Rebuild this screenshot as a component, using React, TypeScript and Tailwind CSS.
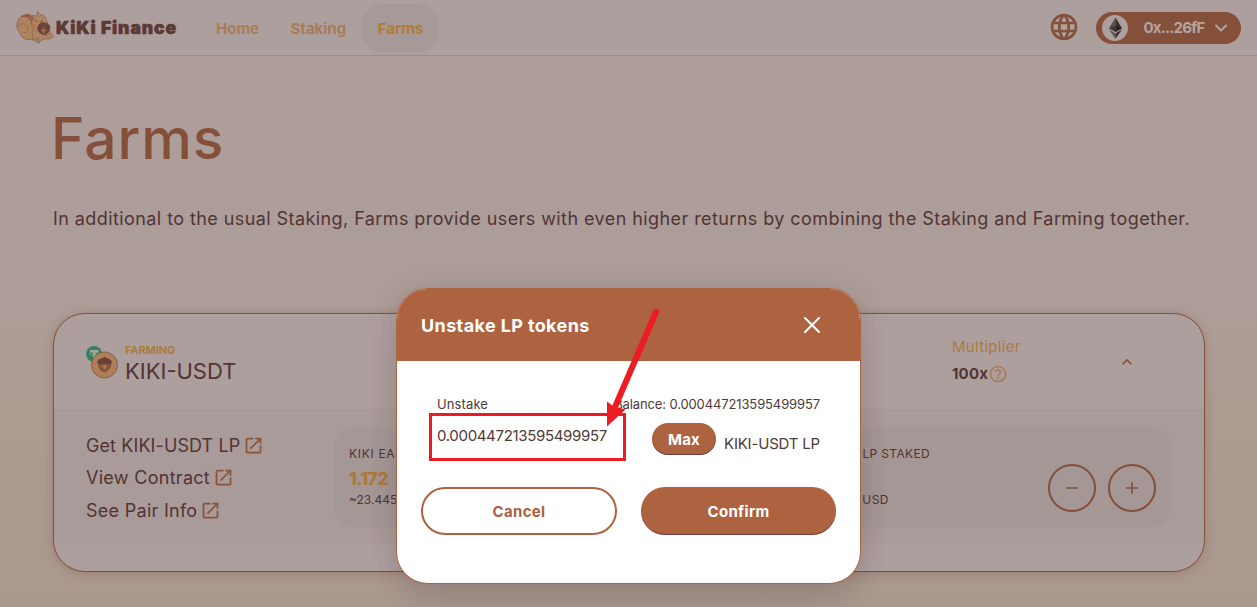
import type { ReactNode } from "react";
import { MdAdd, MdHelpOutline, MdKeyboardArrowUp, MdLanguage, MdOpenInNew, MdRemove } from "react-icons/md";

function Squirrel() {
  return (
    <svg width="40" height="36" viewBox="0 0 40 36" fill="none" stroke="#84604d" strokeWidth="0.7" strokeLinejoin="round" strokeLinecap="round">
      <path d="M17 29C10 31 5 28 4 23C-1 19 0 9 6 6C11 2 18 5 19 11L22 20Z" fill="#ae835f" />
      <path d="M6 6.500C11 4.500 16 9 16.500 15M10 5C15 5 18 9 18.500 13" stroke="#8f5b42" strokeWidth="1.500" />
      <path d="M2 17C4 12 12 13 12 19C12 22 9 24 7 22" />
      <path d="M17 9L16.500 5L19.500 6L21 5.500L21.500 1.500L24.500 4.500C28 5 30.500 8 31 12L34 16L34 22L37.500 27L33 29L27 29L23 33L17 30C15 25 17 21 18 19C15 17 15 12 17 9Z" fill="#ad8560" />
      <circle cx="17.500" cy="15.500" r="2" fill="#b57556" stroke="none" />
      <path d="M19 10.500l2 .7M24.500 11.500l2-.7" stroke="#654139" />
      <path d="M22 18C22 14 26 12 28 13C32 13 34.500 16 33 19C33 23 30 24.500 27.500 24.500C24 24 22.500 22 22 18Z" fill="#6f4339" stroke="#5b3732" />
      <path d="M27.500 17l1 2.500 2.500.5-2 1.500-1.500 2.500-1-2.500-2-1.500 2-.5z" fill="#a17138" stroke="none" />
      <path d="M20 20l3 2M33 24l-4 2M17 30l5-2 1 5" />
    </svg>
  );
}

function TokenPair() {
  return (
    <svg width="34" height="34" viewBox="0 0 34 34">
      <circle cx="8" cy="8" r="8" fill="#397e64" />
      <path d="M4 4h8.500v2.400H9.600V13H7V6.400H4z" fill="#a5aaa0" />
      <ellipse cx="8.200" cy="8" rx="5" ry="1.300" fill="none" stroke="#8ba394" strokeWidth="0.6" />
      <circle cx="18.500" cy="19" r="13" fill="#ac7f59" stroke="#7f5c46" strokeWidth="0.9" />
      <path d="M12 17.500C11 14 14.500 12.500 17.500 12L18 11H19.500L20 12C23 12.500 26.500 14 25 17.500C26 22.500 21.500 25.500 18.500 26.500C15.500 25.500 11.500 22.500 12 17.500Z" fill="#85543f" />
      <path d="M11.500 17.500C10.500 14 14.500 12.500 17.500 12L18 11H19.500L20 12C23 12.500 26.500 14 25.500 17.500C23.500 19.500 21.500 17 18.500 18C15.500 17 13.500 19.500 11.500 17.500Z" fill="#684038" />
      <path d="M18.500 18l1.200 1.600 1.800.7-1.500 1.200-1.500 2-1.500-2-1.500-1.200 1.800-.7z" fill="#ab7941" />
    </svg>
  );
}

function Ethereum() {
  return (
    <svg width="26" height="26" viewBox="0 0 26 26">
      <circle cx="13" cy="13" r="13" fill="#ad9f9d" />
      <path d="M13.500 2.500L7 13.200L13.500 17Z" fill="#5c504f" />
      <path d="M13.500 2.500L20 13.200L13.500 17Z" fill="#382e2e" />
      <path d="M7 13.200L13.500 10.300V17Z" fill="#453a3a" />
      <path d="M20 13.200L13.500 10.300V17Z" fill="#2b2424" />
      <path d="M7 14.600L13.500 18.400V23.700Z" fill="#5c504f" />
      <path d="M20 14.600L13.500 18.400V23.700Z" fill="#382e2e" />
    </svg>
  );
}

function FarmLink({ children, className }: { children: string; className: string }) {
  return (
    <a className="flex h-[32.5px] items-center text-[18px] text-[#523433]">
      <span className={className}>{children}</span>
      <MdOpenInNew size={21} className="ml-[3px] shrink-0 text-[#8c533b]" />
    </a>
  );
}

function RoundButton({ children }: { children: ReactNode }) {
  return <button className="flex size-12 items-center justify-center rounded-full border-2 border-[#84503a] text-[#84503a]">{children}</button>;
}

function Header() {
  return (
    <header className="flex h-14 items-center border-b border-[#9b8d8c] bg-[#ad9f9d] pr-4 pl-4 text-[15px] font-bold">
      <Squirrel />
      <span className="w-[160px] pt-px text-[17.5px] leading-none font-black tracking-[0.9px] text-[#5b3a36] [-webkit-text-stroke:0.6px_#5b3a36]">KiKi Finance</span>
      <nav className="flex items-center text-[#a87c58]">
        <a className="w-[74.5px] pt-[3px]">Home</a>
        <a className="w-[71.5px] pt-[3px]">Staking</a>
        <a className="flex h-12 w-[77px] items-center justify-center rounded-[20px] bg-[#a79997] pt-[3px] text-[#b07d34]">Farms</a>
      </nav>
      <MdLanguage size={32} className="mb-px ml-auto text-[#84503a]" />
      <button className="ml-4 flex h-8 w-[145px] items-center rounded-full bg-[#84503a] text-[#b3a6a4]">
        <span className="ml-1.5"><Ethereum /></span>
        <span className="ml-[15px] w-[62px] pt-[2px] text-[15px] tracking-[-0.76px]">0x...26fF</span>
        <svg className="ml-[10px]" width="12" height="8" viewBox="0 0 12 8" fill="none" stroke="currentColor" strokeWidth="1.9" strokeLinecap="round" strokeLinejoin="round"><path d="M1 1.5L6 6.5L11 1.5" /></svg>
      </button>
    </header>
  );
}

function FarmCard() {
  return (
    <section className="mt-[74px] flex h-[259px] flex-col overflow-hidden rounded-[32px] border border-[#84503a] bg-[#ad9f9d] text-[#523433] shadow-[0_1px_8px_rgba(125,75,55,0.35)]">
      <div className="flex h-[96px] shrink-0 border-b border-[#a39593] pl-8">
        <div className="pt-8"><TokenPair /></div>
        <div className="ml-[5px] w-[827px] pt-7">
          <div className="h-4 text-[11px] leading-4 font-bold tracking-[-0.12px] text-[#ab7a3c]">FARMING</div>
          <div className="h-[26px] text-[22px] leading-[26px]">KIKI-USDT</div>
        </div>
        <div className="w-[165px] pt-[21px]">
          <div className="h-6 text-[15px] leading-6 tracking-[0.3px] text-[#ab7a3c]">Multiplier</div>
          <div className="mt-[3px] flex h-6 items-center text-[15px] font-bold tracking-[0.15px]">100x<MdHelpOutline size={20} className="text-[#a87c58]" /></div>
        </div>
        <MdKeyboardArrowUp size={20} className="mt-[38px] text-[#84503a]" />
      </div>
      <div className="flex h-[133px] shrink-0 bg-[#a99b99] pt-[17px] pl-8">
        <div className="w-[248px] pt-[2px]">
          <FarmLink className="tracking-[0.1px]">Get KIKI-USDT LP</FarmLink>
          <FarmLink className="tracking-[0.29px]">View Contract</FarmLink>
          <FarmLink className="tracking-[0.28px]">See Pair Info</FarmLink>
        </div>
        <div className="flex h-[100px] w-[837px] rounded-[20px] bg-[#a59796] px-[15px] text-[12px]">
          <div className="w-[450px] pt-[17px]">
            <div className="h-5 leading-5 tracking-[0.7px]">KIKI EARNED</div>
            <div className="h-[30px] text-[18px] leading-[30px] font-extrabold tracking-[-0.74px] text-[#ab7a3c]">1.172</div>
            <div className="h-3 leading-3">~23.445 USD</div>
          </div>
          <div className="pt-[17px]">
            <div className="flex h-5 w-[131px] items-center justify-end tracking-[0.35px]">KIKI-USDT LP STAKED</div>
            <div className="mt-[30px] w-[90px] text-right leading-3 tracking-[0.5px]">~0 USD</div>
          </div>
          <div className="ml-auto flex gap-3 pt-[37px]">
            <RoundButton><MdRemove size={20} /></RoundButton>
            <RoundButton><MdAdd size={20} /></RoundButton>
          </div>
        </div>
      </div>
    </section>
  );
}

function UnstakeModal() {
  return (
    <div role="dialog" className="absolute top-[288px] left-[396px] h-[296px] w-[465px] overflow-hidden rounded-[32px] border border-[#ad6240] bg-white text-[#4f3a38] shadow-[0_20px_36px_-8px_rgba(14,14,44,0.12),0_0_28px_rgba(60,40,40,0.12)]">
      <div className="flex h-[72px] items-center justify-between bg-[#ad6240] pr-10 pl-6 text-white">
        <h2 className="text-[18px] font-bold tracking-[0.38px]">Unstake LP tokens</h2>
        <svg width="16" height="16" viewBox="0 0 16 16" stroke="currentColor" strokeWidth="2" strokeLinecap="round"><path d="M1 1L15 15M15 1L1 15" /></svg>
      </div>
      <div className="mt-[34px] flex h-5 items-center justify-between px-10 text-[13px]">
        <span className="tracking-[0.11px]">Unstake</span>
        <span className="tracking-[-0.12px]">Balance: 0.000447213595499957</span>
      </div>
      <div className="mt-2 flex h-8 pl-10 text-[15px]">
        <div className="mt-px w-[215px] leading-6 tracking-[-0.33px]">0.000447213595499957</div>
        <button className="h-8 w-16 rounded-2xl bg-[#ad6240] pt-0.5 font-bold tracking-[0.21px] text-white shadow-[inset_0_-1px_0_rgba(60,20,60,0.5)]">Max</button>
        <div className="mt-[9px] ml-2 leading-6 tracking-[-0.19px]">KIKI-USDT LP</div>
      </div>
      <div className="mt-8 flex gap-6 pl-6 text-[15px] font-bold tracking-[0.34px]">
        <button className="h-12 w-[196px] rounded-full border-2 border-[#ad6240] pt-0.5 text-[#ad6240]">Cancel</button>
        <button className="h-12 w-[195px] rounded-full bg-[#ad6240] pt-0.5 text-white shadow-[inset_0_-1px_0_rgba(60,20,60,0.5)]">Confirm</button>
      </div>
    </div>
  );
}

function Annotation() {
  return (
    <svg className="absolute top-[300px] left-[420px]" width="250" height="170" viewBox="420 300 250 170">
      <rect x="430.500" y="414.500" width="194" height="45" fill="none" stroke="#ed1c24" strokeWidth="3" />
      <path d="M656 312L615 407" stroke="#ed1c24" strokeWidth="6" strokeLinecap="round" />
      <path d="M607 401.500L613 406L625.500 409.500L607 426.500Z" fill="#ed1c24" />
    </svg>
  );
}

export default function App() {
  return (
    <div className="relative h-[607px] w-[1257px] overflow-hidden bg-[linear-gradient(180deg,#ad9f9d_0%,#ad9d99_48%,#ac9b91_68%,#aa978d_100%)] font-['Inter',sans-serif] whitespace-nowrap">
      <Header />
      <main className="pr-[52px] pl-[53px]">
        <h1 className="-ml-[2px] pt-12 text-[57px] leading-[70px] font-medium tracking-[0.9px] text-[#84503a]">Farms</h1>
        <p className="mt-8 h-[33px] text-[18px] leading-[26px] tracking-[0.42px] text-[#523433]">In additional to the usual Staking, Farms provide users with even higher returns by combining the Staking and Farming together.</p>
        <FarmCard />
      </main>
      <UnstakeModal />
      <Annotation />
    </div>
  );
}
